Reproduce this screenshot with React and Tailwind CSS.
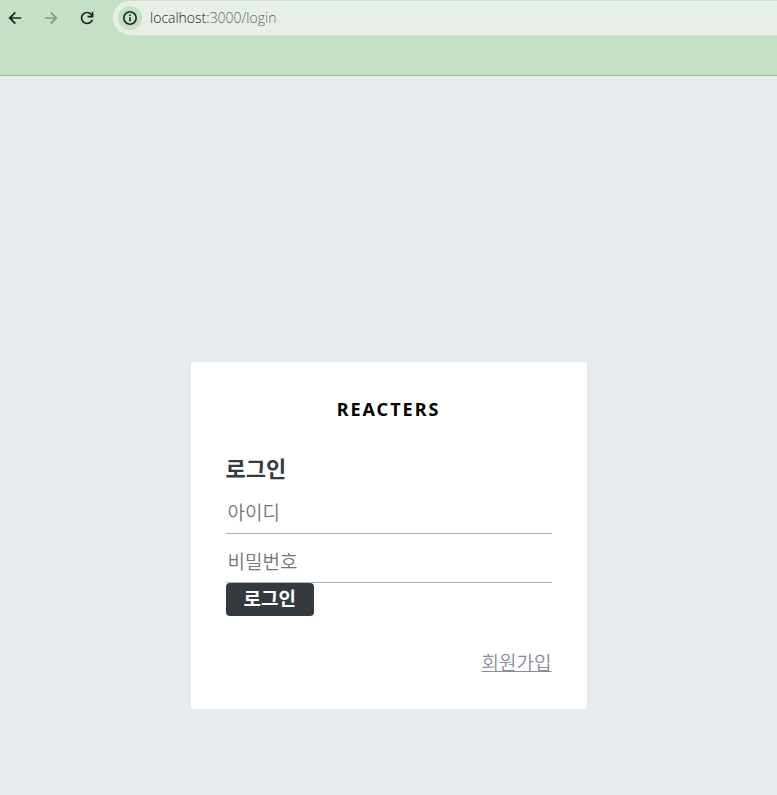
import { useState } from 'react';

function BrowserBar() {
  return (
    <header className="h-19 border-b border-[#a3b1a3] bg-[#c5e1c5] pt-px">
      <div className="flex items-center">
        <nav className="flex w-[113px] shrink-0 items-center gap-4 pl-[5px] text-[#1f2420]">
          <button type="button" aria-label="Back">
            <svg width="20" height="20" viewBox="0 0 24 24" fill="currentColor">
              <path d="M8.2 13l4.9 4.9L11.6 19.4 4.2 12l7.4-7.4 1.5 1.5L8.2 11H19.4v2z" />
            </svg>
          </button>
          <button type="button" aria-label="Forward" disabled className="text-[#879a88]">
            <svg width="20" height="20" viewBox="0 0 24 24" fill="currentColor">
              <path d="M15.8 11l-4.9-4.9 1.5-1.5 7.4 7.4-7.4 7.4-1.5-1.5 4.9-4.9H4.6v-2z" />
            </svg>
          </button>
          <button type="button" aria-label="Reload">
            <svg width="20" height="20" viewBox="0 0 24 24" fill="currentColor">
              <path d="M12 19.6q-3.1 0-5.3-2.2T4.5 12t2.2-5.4T12 4.4q1.7 0 3.2.7t2.5 2V4.4h2v7h-7v-2h4.2q-.8-1.4-2.1-2.2T12 6.4q-2.3 0-3.9 1.6T6.5 12t1.6 4 3.9 1.6q1.8 0 3.2-1t2-2.6h2.100q-.6 2.500-2.600 4T12 19.600z" />
            </svg>
          </button>
        </nav>
        <div className="flex h-[34px] flex-1 items-center gap-2 rounded-l-full bg-[#e8efe8] pl-[5px]">
          <span className="flex size-6 items-center justify-center rounded-full bg-[#c5e1c5] text-[#1f2420]">
            <svg width="16" height="16" viewBox="0 0 16 16" fill="none">
              <circle cx="8" cy="8" r="6.2" stroke="currentColor" strokeWidth="1.6" />
              <path d="M8 7.2v4" stroke="currentColor" strokeWidth="1.6" />
              <path d="M8 4.5v1.6" stroke="currentColor" strokeWidth="1.6" />
            </svg>
          </span>
          <p className="font-['Open_Sans','Noto_Sans',sans-serif] text-sm font-light text-[#1f2420]">
            localhost:<span className="text-[#5f665f]">3000/login</span>
          </p>
        </div>
      </div>
    </header>
  );
}

const inputClass =
  'block h-[37px] w-full border-b border-[#adb5bd] px-[2px] pb-2 text-[19px] font-[350] leading-6 outline-none placeholder:text-[#757575]';

function LoginForm() {
  const [username, setUsername] = useState('');
  const [password, setPassword] = useState('');

  const handleSubmit = (e) => {
    e.preventDefault();
  };

  return (
    <form onSubmit={handleSubmit}>
      <h3 className="mb-4 text-[22px] font-bold leading-7 text-[#343a40]">로그인</h3>
      <input
        type="text"
        aria-label="아이디"
        placeholder="아이디"
        autoComplete="username"
        className={inputClass}
        value={username}
        onChange={(e) => setUsername(e.target.value)}
      />
      <input
        type="password"
        aria-label="비밀번호"
        placeholder="비밀번호"
        autoComplete="new-password"
        className={`${inputClass} mt-3`}
        value={password}
        onChange={(e) => setPassword(e.target.value)}
      />
      <button
        type="submit"
        className="block h-[33px] rounded bg-[#343a40] px-[18px] pb-1 text-[19px] font-bold leading-7 text-white"
      >
        로그인
      </button>
    </form>
  );
}

export default function App() {
  return (
    <div className="flex min-h-screen flex-col bg-[#e7ebee] font-['Noto_Sans_CJK_KR',sans-serif]">
      <BrowserBar />
      <main className="flex flex-1 flex-col items-center px-4 pt-[286px] pb-20">
        <section className="w-full max-w-[396px] rounded-xs bg-white p-[35px] shadow-[0_0_9px_rgba(0,0,0,0.025)]">
          <div className="mb-8 text-center font-['Noto_Sans',sans-serif] text-lg font-bold leading-6 tracking-[2px] text-black">
            REACTERS
          </div>
          <LoginForm />
          <div className="mt-[34px] text-right text-[19px] font-[350] leading-6">
            <a href="/register" className="text-[#868e96] underline">
              회원가입
            </a>
          </div>
        </section>
      </main>
    </div>
  );
}
